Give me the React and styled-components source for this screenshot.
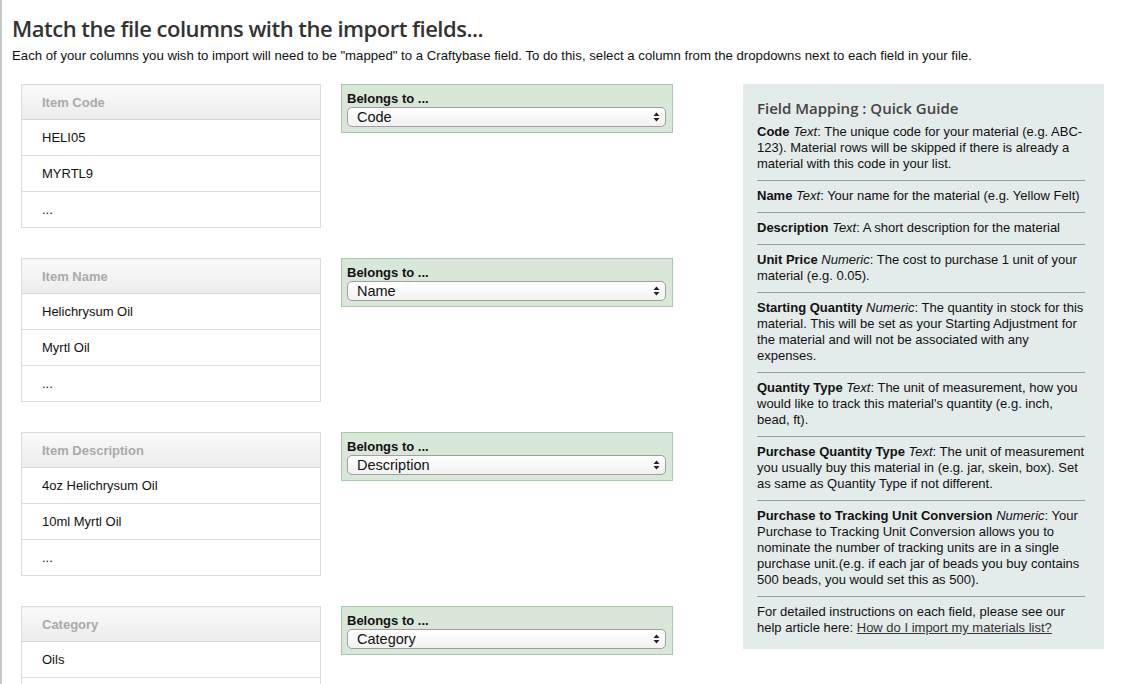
import React from "react";
import styled, { createGlobalStyle } from "styled-components";

const GlobalStyle = createGlobalStyle`
  html, body {
    margin: 0;
    padding: 0;
    background: #ffffff;
  }
  body {
    font-family: "Liberation Sans", Arial, sans-serif;
    font-size: 13px;
    color: #222;
  }
`;

const Page = styled.div`
  border-left: 2px solid #c8c8c8;
  padding: 14px 0 0 10px;
  min-height: 684px;
  box-sizing: border-box;
`;

const Title = styled.h1`
  margin: 0;
  font-family: "Open Sans", "DejaVu Sans", sans-serif;
  font-weight: 600;
  font-size: 22px;
  letter-spacing: -0.5px;
  line-height: 29px;
  color: #333;
`;

const Intro = styled.p`
  margin: 5px 0 0;
  font-size: 13.2px;
  line-height: 16px;
  color: #111;
`;

const Content = styled.div`
  display: flex;
  align-items: flex-start;
  margin-top: 20px;
  padding-left: 9px;
`;

const Mappings = styled.div`
  display: flex;
  flex-direction: column;
  gap: 30px;
  width: 652px;
`;

const MappingRow = styled.div`
  display: flex;
  align-items: flex-start;
  gap: 20px;
`;

const SampleTable = styled.table`
  width: 300px;
  border-collapse: collapse;
  border: 1px solid #dcdcdc;
`;

const HeadCell = styled.th`
  height: 34px;
  padding: 0 0 0 20px;
  text-align: left;
  font-size: 13px;
  font-weight: bold;
  color: #aaa;
  background: linear-gradient(#fafafa, #ececec);
  border-bottom: 1px solid #d6d6d6;
`;

const Cell = styled.td`
  height: 35px;
  padding: 0 0 0 20px;
  font-size: 13px;
  color: #111;
  border-top: 1px solid #dcdcdc;
`;

const BelongsBox = styled.div`
  width: 332px;
  box-sizing: border-box;
  background: #d8e7d8;
  border: 1px solid #a9c7a9;
  padding: 6px 6px 5px 5px;
`;

const BelongsLabel = styled.label`
  display: block;
  font-weight: bold;
  font-size: 13px;
  line-height: 15px;
  color: #111;
`;

const SelectWrap = styled.div`
  position: relative;
  margin-top: 1px;
`;

const Select = styled.select`
  appearance: none;
  -webkit-appearance: none;
  width: 100%;
  height: 20px;
  box-sizing: border-box;
  border: 1px solid #9f9f9f;
  border-radius: 5px;
  background: linear-gradient(#ffffff, #f1f1f1);
  padding: 0 20px 0 9px;
  font-family: "Liberation Sans", Arial, sans-serif;
  font-size: 14.5px;
  line-height: 18px;
  color: #111;
  outline: none;
`;

const Arrows = styled.svg`
  position: absolute;
  right: 6px;
  top: 5px;
  pointer-events: none;
`;

const Guide = styled.aside`
  width: 361px;
  box-sizing: border-box;
  margin-left: 70px;
  background: #e3ebeb;
  padding: 14px 19px 13px 14px;
  font-size: 13px;
  line-height: 16px;
  color: #111;
`;

const GuideTitle = styled.h2`
  margin: 0 0 6px;
  font-family: "Open Sans", "DejaVu Sans", sans-serif;
  font-weight: 600;
  font-size: 15px;
  line-height: 20px;
  color: #444;
`;

const GuideItem = styled.p`
  margin: 0;
  padding: 0 0 8px;
  & + & {
    border-top: 1px solid #9a9a9a;
    padding-top: 7px;
  }
  &:last-child {
    padding-bottom: 0;
  }
`;

const Link = styled.a`
  color: #333;
  text-decoration: underline;
`;

const columns = [
  { head: "Item Code", rows: ["HELI05", "MYRTL9", "..."], field: "Code" },
  { head: "Item Name", rows: ["Helichrysum Oil", "Myrtl Oil", "..."], field: "Name" },
  { head: "Item Description", rows: ["4oz Helichrysum Oil", "10ml Myrtl Oil", "..."], field: "Description" },
  { head: "Category", rows: ["Oils", "...", "..."], field: "Category" },
];

const guide = [
  ["Code", "Text", "The unique code for your material (e.g. ABC-123). Material rows will be skipped if there is already a material with this code in your list."],
  ["Name", "Text", "Your name for the material (e.g. Yellow Felt)"],
  ["Description", "Text", "A short description for the material"],
  ["Unit Price", "Numeric", "The cost to purchase 1 unit of your material (e.g. 0.05)."],
  ["Starting Quantity", "Numeric", "The quantity in stock for this material. This will be set as your Starting Adjustment for the material and will not be associated with any expenses."],
  ["Quantity Type", "Text", "The unit of measurement, how you would like to track this material's quantity (e.g. inch, bead, ft)."],
  ["Purchase Quantity Type", "Text", "The unit of measurement you usually buy this material in (e.g. jar, skein, box). Set as same as Quantity Type if not different."],
  ["Purchase to Tracking Unit Conversion", "Numeric", "Your Purchase to Tracking Unit Conversion allows you to nominate the number of tracking units are in a single purchase unit.(e.g. if each jar of beads you buy contains 500 beads, you would set this as 500)."],
];

const fields = ["Code", "Name", "Description", "Unit Price", "Starting Quantity", "Quantity Type", "Category"];

const App = () => {
  return (
    <>
      <GlobalStyle />
      <Page>
        <Title>Match the file columns with the import fields...</Title>
        <Intro>
          Each of your columns you wish to import will need to be "mapped" to a Craftybase field. To do this, select a column from the dropdowns next to each field in your file.
        </Intro>
        <Content>
          <Mappings>
            {columns.map((col) => (
              <MappingRow key={col.head}>
                <SampleTable>
                  <thead>
                    <tr><HeadCell>{col.head}</HeadCell></tr>
                  </thead>
                  <tbody>
                    {col.rows.map((r, i) => (
                      <tr key={i}><Cell>{r}</Cell></tr>
                    ))}
                  </tbody>
                </SampleTable>
                <BelongsBox>
                  <BelongsLabel>Belongs to ...</BelongsLabel>
                  <SelectWrap>
                    <Select defaultValue={col.field}>
                      {fields.map((f) => (
                        <option key={f} value={f}>{f}</option>
                      ))}
                    </Select>
                    <Arrows width="7" height="10" viewBox="0 0 7 10">
                      <path d="M3.5 0.5 L6.5 4 L0.5 4 Z" fill="#222" />
                      <path d="M3.5 9.5 L6.5 6 L0.5 6 Z" fill="#222" />
                    </Arrows>
                  </SelectWrap>
                </BelongsBox>
              </MappingRow>
            ))}
          </Mappings>
          <Guide>
            <GuideTitle>Field Mapping : Quick Guide</GuideTitle>
            {guide.map(([name, type, text]) => (
              <GuideItem key={name}>
                <b>{name}</b> <i>{type}</i>: {text}
              </GuideItem>
            ))}
            <GuideItem>
              For detailed instructions on each field, please see our help article here:{" "}
              <Link href="#">How do I import my materials list?</Link>
            </GuideItem>
          </Guide>
        </Content>
      </Page>
    </>
  );
};

export default App;
